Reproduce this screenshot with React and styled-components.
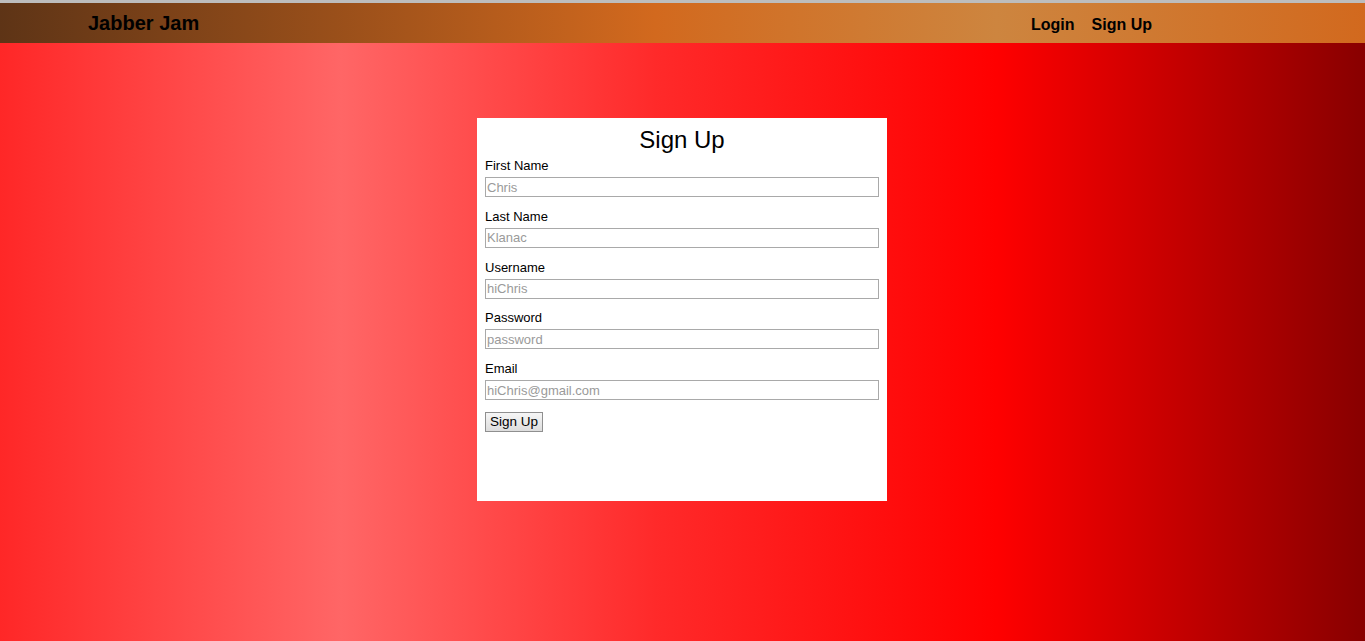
import React from "react";
import styled, { createGlobalStyle } from "styled-components";

const GlobalStyle = createGlobalStyle`
    html, body {
        margin: 0;
        padding: 0;
        height: 100%;
    }
    body {
        font-family: "Liberation Sans", Arial, sans-serif;
    }
    #root {
        min-height: 100vh;
    }
`;

const fields = [
    { label: "First Name", placeholder: "Chris", type: "text" },
    { label: "Last Name", placeholder: "Klanac", type: "text" },
    { label: "Username", placeholder: "hiChris", type: "text" },
    { label: "Password", placeholder: "password", type: "password" },
    { label: "Email", placeholder: "hiChris@gmail.com", type: "email" },
];

function App() {
    return (
        <Page>
            <GlobalStyle />
            {/* 상단 메뉴 */}
            <NavBar>
                <Brand>Jabber Jam</Brand>
                <NavLinks>
                    <NavLink>Login</NavLink>
                    <NavLink>Sign Up</NavLink>
                </NavLinks>
            </NavBar>

            {/* 회원가입 폼 */}
            <Main>
                <SignUpCard onSubmit={(e) => e.preventDefault()}>
                    <Title>Sign Up</Title>
                    {fields.map((f) => (
                        <Field key={f.label}>
                            <Label>{f.label}</Label>
                            <Input type={f.type} placeholder={f.placeholder} />
                        </Field>
                    ))}
                    <SubmitButton type="submit">Sign Up</SubmitButton>
                </SignUpCard>
            </Main>
        </Page>
    );
}

export default App;

const Page = styled.div`
    min-height: 100vh;
    display: flex;
    flex-direction: column;
    border-top: 3px solid #bdbdbd;
    box-sizing: border-box;
    background: linear-gradient(
        to right,
        #ff2727 0%,
        #ff6666 25%,
        #ff2a2a 48%,
        #ff0000 73%,
        #880000 100%
    );
`;

const NavBar = styled.header`
    height: 40px;
    display: flex;
    align-items: center;
    justify-content: space-between;
    padding: 0 213px 0 88px;
    background: linear-gradient(
        to right,
        #5e3416 0%,
        #d2691e 48%,
        #cd853f 73%,
        #d2691e 100%
    );
`;

const Brand = styled.div`
    font-size: 20px;
    font-weight: 700;
    color: #000;
`;

const NavLinks = styled.nav`
    display: flex;
    gap: 17px;
    margin-top: 4px;
`;

const NavLink = styled.a`
    font-size: 16px;
    font-weight: 700;
    color: #000;
    cursor: pointer;
`;

const Main = styled.main`
    flex: 1;
    display: flex;
    justify-content: center;
    padding: 75px 1px 0 0;
`;

const SignUpCard = styled.form`
    width: 410px;
    height: 383px;
    box-sizing: border-box;
    background: #fff;
    padding: 8px 8px 0;
    display: flex;
    flex-direction: column;
    align-items: flex-start;
`;

const Title = styled.h2`
    align-self: stretch;
    margin: 0 0 4px;
    font-size: 24px;
    line-height: 28px;
    font-weight: 400;
    text-align: center;
    color: #000;
`;

const Field = styled.div`
    align-self: stretch;
    display: flex;
    flex-direction: column;
    gap: 4px;
    margin-bottom: 11.75px;
`;

const Label = styled.label`
    font-size: 13px;
    line-height: 15px;
    color: #000;
`;

const Input = styled.input`
    box-sizing: border-box;
    width: 394px;
    height: 20px;
    margin: 0;
    padding: 0 1px;
    border: 1px solid #a9a9a9;
    font-family: "Liberation Sans", Arial, sans-serif;
    font-size: 13px;
    outline: none;

    &::placeholder {
        color: #9a9a9a;
    }
`;

const SubmitButton = styled.button`
    height: 20px;
    padding: 0 4px;
    margin: 0;
    font-family: "Liberation Sans", Arial, sans-serif;
    font-size: 13.5px;
    color: #000;
    border: 1px solid #8f8f8f;
    border-radius: 0;
    background: linear-gradient(to bottom, #f6f6f6, #dddddd);
    cursor: pointer;
`;
